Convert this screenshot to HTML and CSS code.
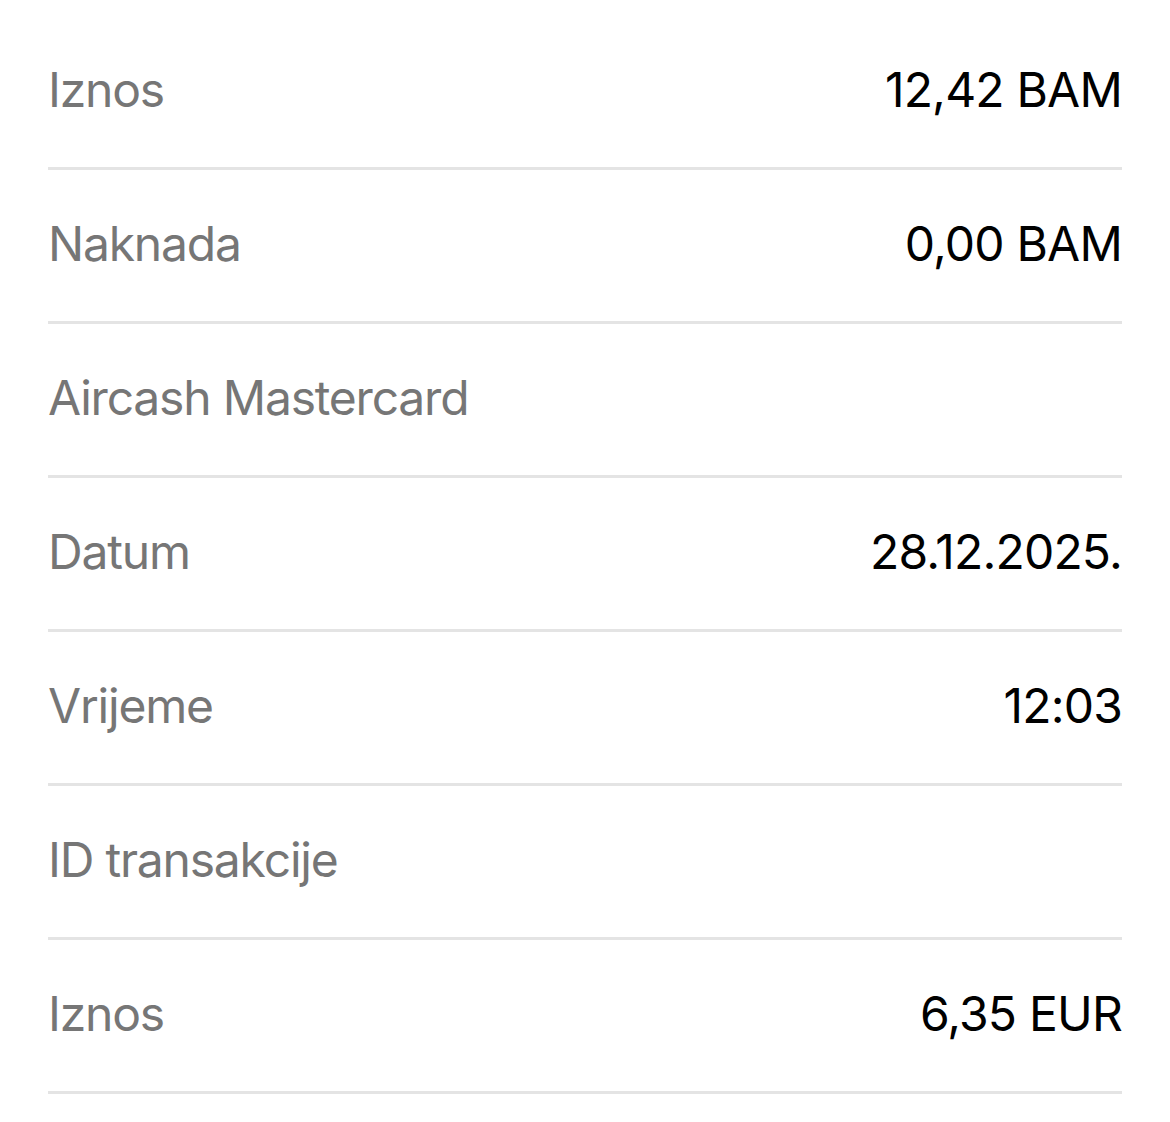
FILE: index.html
```html
<!DOCTYPE html>
<html lang="bs">
<head>
    <meta charset="UTF-8">
    <meta name="viewport" content="width=device-width, initial-scale=1.0">
    <title>Detalji transakcije</title>
    <link rel="stylesheet" href="styles.css">
</head>
<body>
    <div class="details">
        <div class="row">
            <span class="label">Iznos</span>
            <span class="value">12,42 BAM</span>
        </div>
        <div class="row">
            <span class="label">Naknada</span>
            <span class="value">0,00 BAM</span>
        </div>
        <div class="row">
            <span class="label">Aircash Mastercard</span>
        </div>
        <div class="row">
            <span class="label">Datum</span>
            <span class="value">28.12.2025.</span>
        </div>
        <div class="row">
            <span class="label">Vrijeme</span>
            <span class="value">12:03</span>
        </div>
        <div class="row">
            <span class="label">ID transakcije</span>
        </div>
        <div class="row">
            <span class="label">Iznos</span>
            <span class="value">6,35 EUR</span>
        </div>
    </div>
</body>
</html>
```

FILE: styles.css
```css
body {
    margin: 0;
    background-color: #ffffff;
    font-family: Inter, "Noto Sans", sans-serif;
}
.details {
    padding: 16px 48px 0 48px;
}
.row {
    display: flex;
    align-items: center;
    justify-content: space-between;
    height: 147px;
    padding-bottom: 4px;
    border-bottom: 3px solid #e4e4e4;
}
.label {
    font-size: 48px;
    letter-spacing: -1.2px;
    color: #767676;
}
.value {
    font-size: 48px;
    letter-spacing: -0.8px;
    color: #000000;
}
```
